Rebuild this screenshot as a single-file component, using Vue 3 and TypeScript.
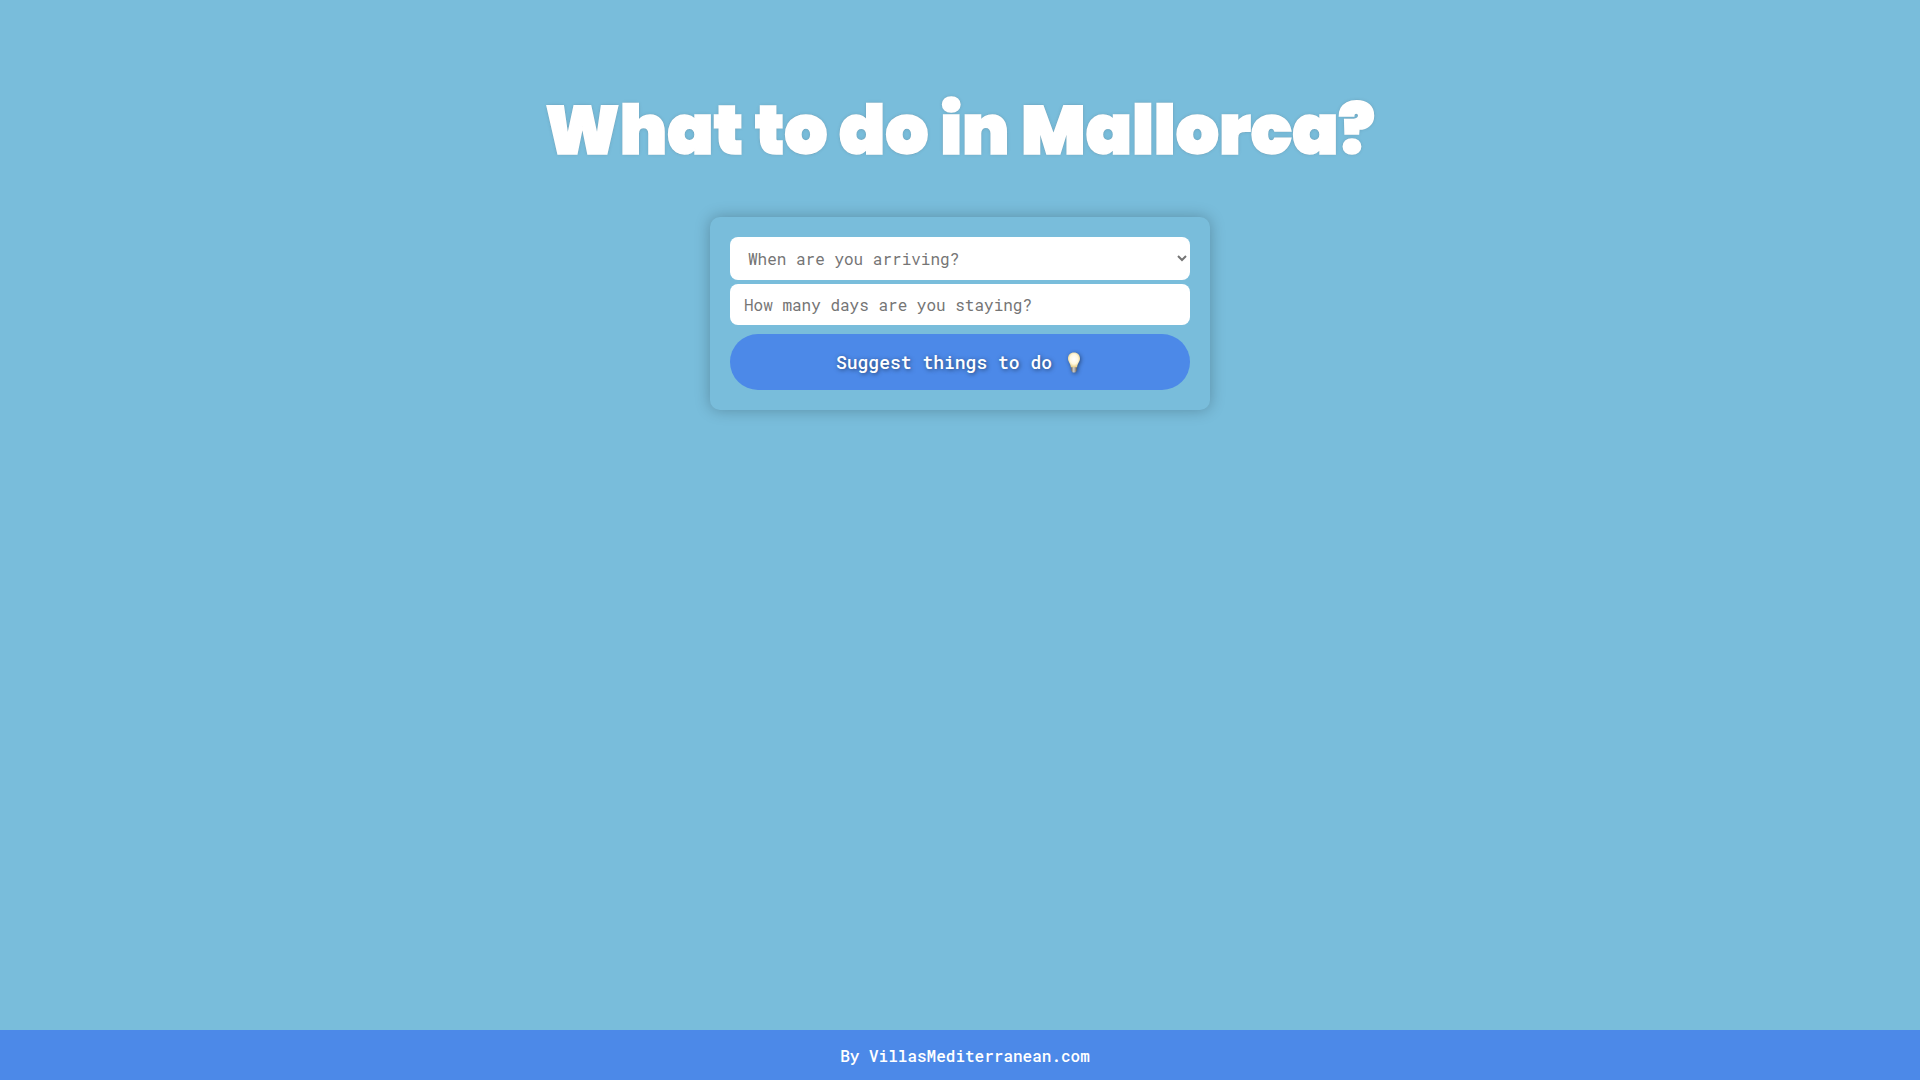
<script setup lang="ts">
import { ref } from 'vue'

const month = ref('')
const days = ref('')
</script>

<template>
  <div class="page">
    <main class="main">
      <h1 class="title">What to do in Mallorca?</h1>
      <form class="card" @submit.prevent>
        <select v-model="month" class="field select">
          <option value="" disabled>When are you arriving?</option>
        </select>
        <input v-model="days" class="field input" type="text" placeholder="How many days are you staying?" />
        <button class="submit" type="submit">
          <span>Suggest things to do</span>
          <svg class="bulb" width="14" height="21" viewBox="0 0 14 21">
            <defs>
              <radialGradient id="glass" cx="50%" cy="45%" r="55%">
                <stop offset="0" stop-color="#ffffff" />
                <stop offset="0.6" stop-color="#fff8e0" />
                <stop offset="1" stop-color="#e6cf88" />
              </radialGradient>
              <linearGradient id="metal" x1="0" x2="1" y1="0" y2="0">
                <stop offset="0" stop-color="#6f6c66" />
                <stop offset="0.45" stop-color="#d0cdc8" />
                <stop offset="1" stop-color="#66635e" />
              </linearGradient>
            </defs>
            <path d="M4.200 13.500h5.600v5.100L8.400 20.500H5.600L4.200 18.600Z" fill="url(#metal)" />
            <path d="M7 .5C3.300.5 1 3.100 1 6.500c0 3.200 2.400 4.700 2.900 8.700h6.200C10.600 11.200 13 9.700 13 6.500 13 3.100 10.700.5 7 .5Z" fill="url(#glass)" />
          </svg>
        </button>
      </form>
    </main>
    <footer class="footer">By VillasMediterranean.com</footer>
  </div>
</template>

<style>
body {
  margin: 0;
}
</style>

<style scoped>
.page {
  height: 100vh;
  display: flex;
  flex-direction: column;
  background: #79bddb;
  font-family: 'Roboto Mono', 'DejaVu Sans Mono', monospace;
  overflow: hidden;
}
.main {
  flex: 1;
  display: flex;
  flex-direction: column;
  align-items: center;
}
.title {
  margin: 77px 0 0;
  height: 140px;
  font: 900 68px/108px Poppins, Inter, sans-serif;
  color: #fff;
  -webkit-text-stroke: 1.5px #fff;
  text-shadow: 0 0 1px #8a7f78, 0 0 1px #8a7f78, 0 0 4px rgba(0, 0, 0, 0.15);
  white-space: nowrap;
}
.card {
  box-sizing: border-box;
  width: 500px;
  height: 193px;
  padding: 20px;
  border-radius: 10px;
  box-shadow: 0 0 15px rgba(0, 0, 0, 0.25);
  background: #79bddb;
  display: flex;
  flex-direction: column;
}
.field {
  box-sizing: border-box;
  width: 100%;
  border: 0;
  border-radius: 8px;
  background: #fff;
  color: #757575;
  font: 400 16px 'Roboto Mono', 'DejaVu Sans Mono', monospace;
}
.select {
  height: 43px;
  padding: 0 14px;
  margin-bottom: 4px;
}
.input {
  height: 41px;
  padding: 0 14px;
  margin-bottom: 9px;
}
.input::placeholder {
  color: #757575;
}
.submit {
  height: 56px;
  border: 0;
  border-radius: 30px;
  padding: 0 3px 0 0;
  background: #4c89e8;
  color: #fff;
  font: 500 18px 'Roboto Mono', 'DejaVu Sans Mono', monospace;
  text-shadow: 1px 1px 4px rgba(0, 0, 0, 0.5);
  display: flex;
  align-items: center;
  justify-content: center;
  gap: 15px;
}
.bulb {
  filter: drop-shadow(1px 1px 2px rgba(0, 0, 0, 0.45));
}
.footer {
  box-sizing: border-box;
  height: 50px;
  padding-left: 10px;
  background: #4c89e8;
  color: #fff;
  text-align: center;
  font-size: 16px;
  font-weight: 500;
  line-height: 52px;
}
</style>
